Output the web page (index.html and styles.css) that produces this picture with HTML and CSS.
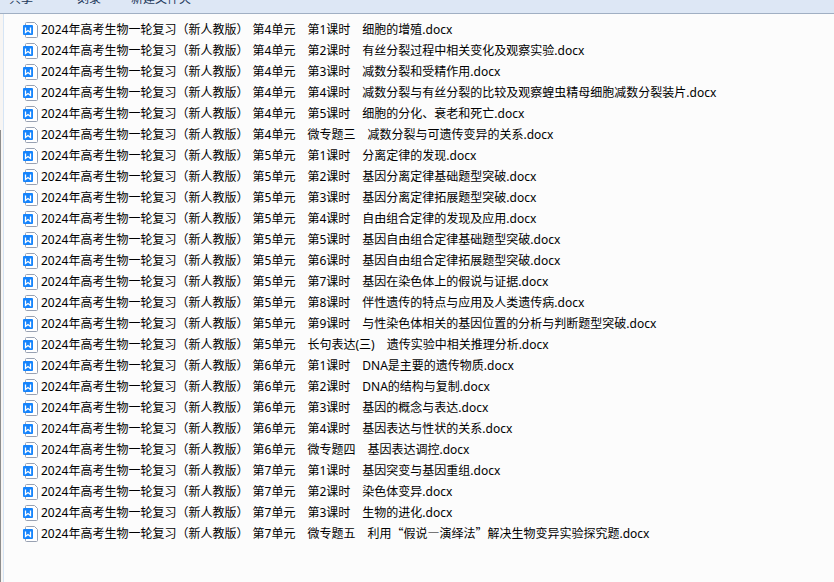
FILE: index.html
```html
<!DOCTYPE html>
<html lang="zh-CN">
<head>
    <meta charset="UTF-8">
    <meta name="viewport" content="width=device-width, initial-scale=1.0">
    <title>高考生物一轮复习</title>
    <link rel="stylesheet" href="styles.css">
</head>
<body>
    <svg class="symbols" aria-hidden="true">
        <symbol id="docx" viewBox="0 0 16 16">
            <path d="M3.5 .5h8l3 3v11a1 1 0 0 1-1 1h-10a1 1 0 0 1-1-1v-13a1 1 0 0 1 1-1z" fill="#fff" stroke="#98a1b2"/>
            <rect x="0" y="3" width="10" height="10" rx="1" fill="#1684fc"/>
            <path d="M2.5 5.5v5l2.5-2 2.5 2v-5" fill="none" stroke="#fff" stroke-width="1.3"/>
        </symbol>
    </svg>

    <header class="toolbar">
        <button type="button" class="has-menu">共享</button>
        <button type="button">刻录</button>
        <button type="button">新建文件夹</button>
    </header>

    <div class="window">
        <div class="nav-edge"><div class="nav-thumb"></div></div>
        <main class="file-pane">
            <ul id="fileList" class="file-list"></ul>
        </main>
    </div>

    <script>
        const prefix = '2024年高考生物一轮复习（新人教版） ';

        const files = [
            '第4单元　第1课时　细胞的增殖',
            '第4单元　第2课时　有丝分裂过程中相关变化及观察实验',
            '第4单元　第3课时　减数分裂和受精作用',
            '第4单元　第4课时　减数分裂与有丝分裂的比较及观察蝗虫精母细胞减数分裂装片',
            '第4单元　第5课时　细胞的分化、衰老和死亡',
            '第4单元　微专题三　减数分裂与可遗传变异的关系',
            '第5单元　第1课时　分离定律的发现',
            '第5单元　第2课时　基因分离定律基础题型突破',
            '第5单元　第3课时　基因分离定律拓展题型突破',
            '第5单元　第4课时　自由组合定律的发现及应用',
            '第5单元　第5课时　基因自由组合定律基础题型突破',
            '第5单元　第6课时　基因自由组合定律拓展题型突破',
            '第5单元　第7课时　基因在染色体上的假说与证据',
            '第5单元　第8课时　伴性遗传的特点与应用及人类遗传病',
            '第5单元　第9课时　与性染色体相关的基因位置的分析与判断题型突破',
            '第5单元　长句表达(三)　遗传实验中相关推理分析',
            '第6单元　第1课时　DNA是主要的遗传物质',
            '第6单元　第2课时　DNA的结构与复制',
            '第6单元　第3课时　基因的概念与表达',
            '第6单元　第4课时　基因表达与性状的关系',
            '第6单元　微专题四　基因表达调控',
            '第7单元　第1课时　基因突变与基因重组',
            '第7单元　第2课时　染色体变异',
            '第7单元　第3课时　生物的进化',
            '第7单元　微专题五　利用<span class="wide">“假说—演绎法”</span>解决生物变异实验探究题'
        ];

        // Display the files
        document.getElementById('fileList').innerHTML = files.map(name => `
            <li>
                <a class="file" href="#">
                    <svg class="file-icon" aria-hidden="true"><use href="#docx"/></svg>
                    <span class="file-name">${prefix}<span class="lesson">${name}.docx</span></span>
                </a>
            </li>
        `).join('');
    </script>
</body>
</html>
```

FILE: styles.css
```css
* {
    margin: 0;
    padding: 0;
    box-sizing: border-box;
}

body {
    display: flex;
    flex-direction: column;
    min-height: 100vh;
    background-color: #fcfcfc;
    color: #000;
    font-family: "Noto Sans", "Noto Sans CJK SC", sans-serif;
    font-size: 12px;
}

.symbols {
    display: none;
}

.toolbar {
    display: flex;
    align-items: flex-end;
    gap: 30px;
    height: 14px;
    padding: 0 9px 6px;
    overflow: hidden;
    background-color: #dde7f5;
    border-bottom: 1px solid #a0afc3;
}

.toolbar button {
    border: none;
    background: none;
    color: #1e395b;
    font: inherit;
    line-height: 16px;
    cursor: pointer;
}

.toolbar .has-menu {
    padding-right: 14px;
}

.window {
    display: flex;
    flex: 1;
}

.nav-edge {
    width: 4px;
    padding-top: 116px;
    background-color: #f7f5f3;
    border-right: 1px solid #d6e5f5;
}

.nav-thumb {
    width: 1px;
    height: 100%;
    background-color: #8c8c8c;
}

.file-pane {
    flex: 1;
    padding: 5px 19px;
}

.file-list {
    list-style: none;
}

.file {
    display: flex;
    align-items: flex-end;
    gap: 2px;
    height: 21px;
    padding-bottom: 2px;
    color: inherit;
    line-height: 16px;
    text-decoration: none;
    white-space: nowrap;
}

.file-icon {
    width: 16px;
    height: 16px;
}

.lesson {
    margin-left: 1px;
}

/* full-width quotes and dash */
.wide {
    font-family: "Noto Sans CJK SC", sans-serif;
}
```
